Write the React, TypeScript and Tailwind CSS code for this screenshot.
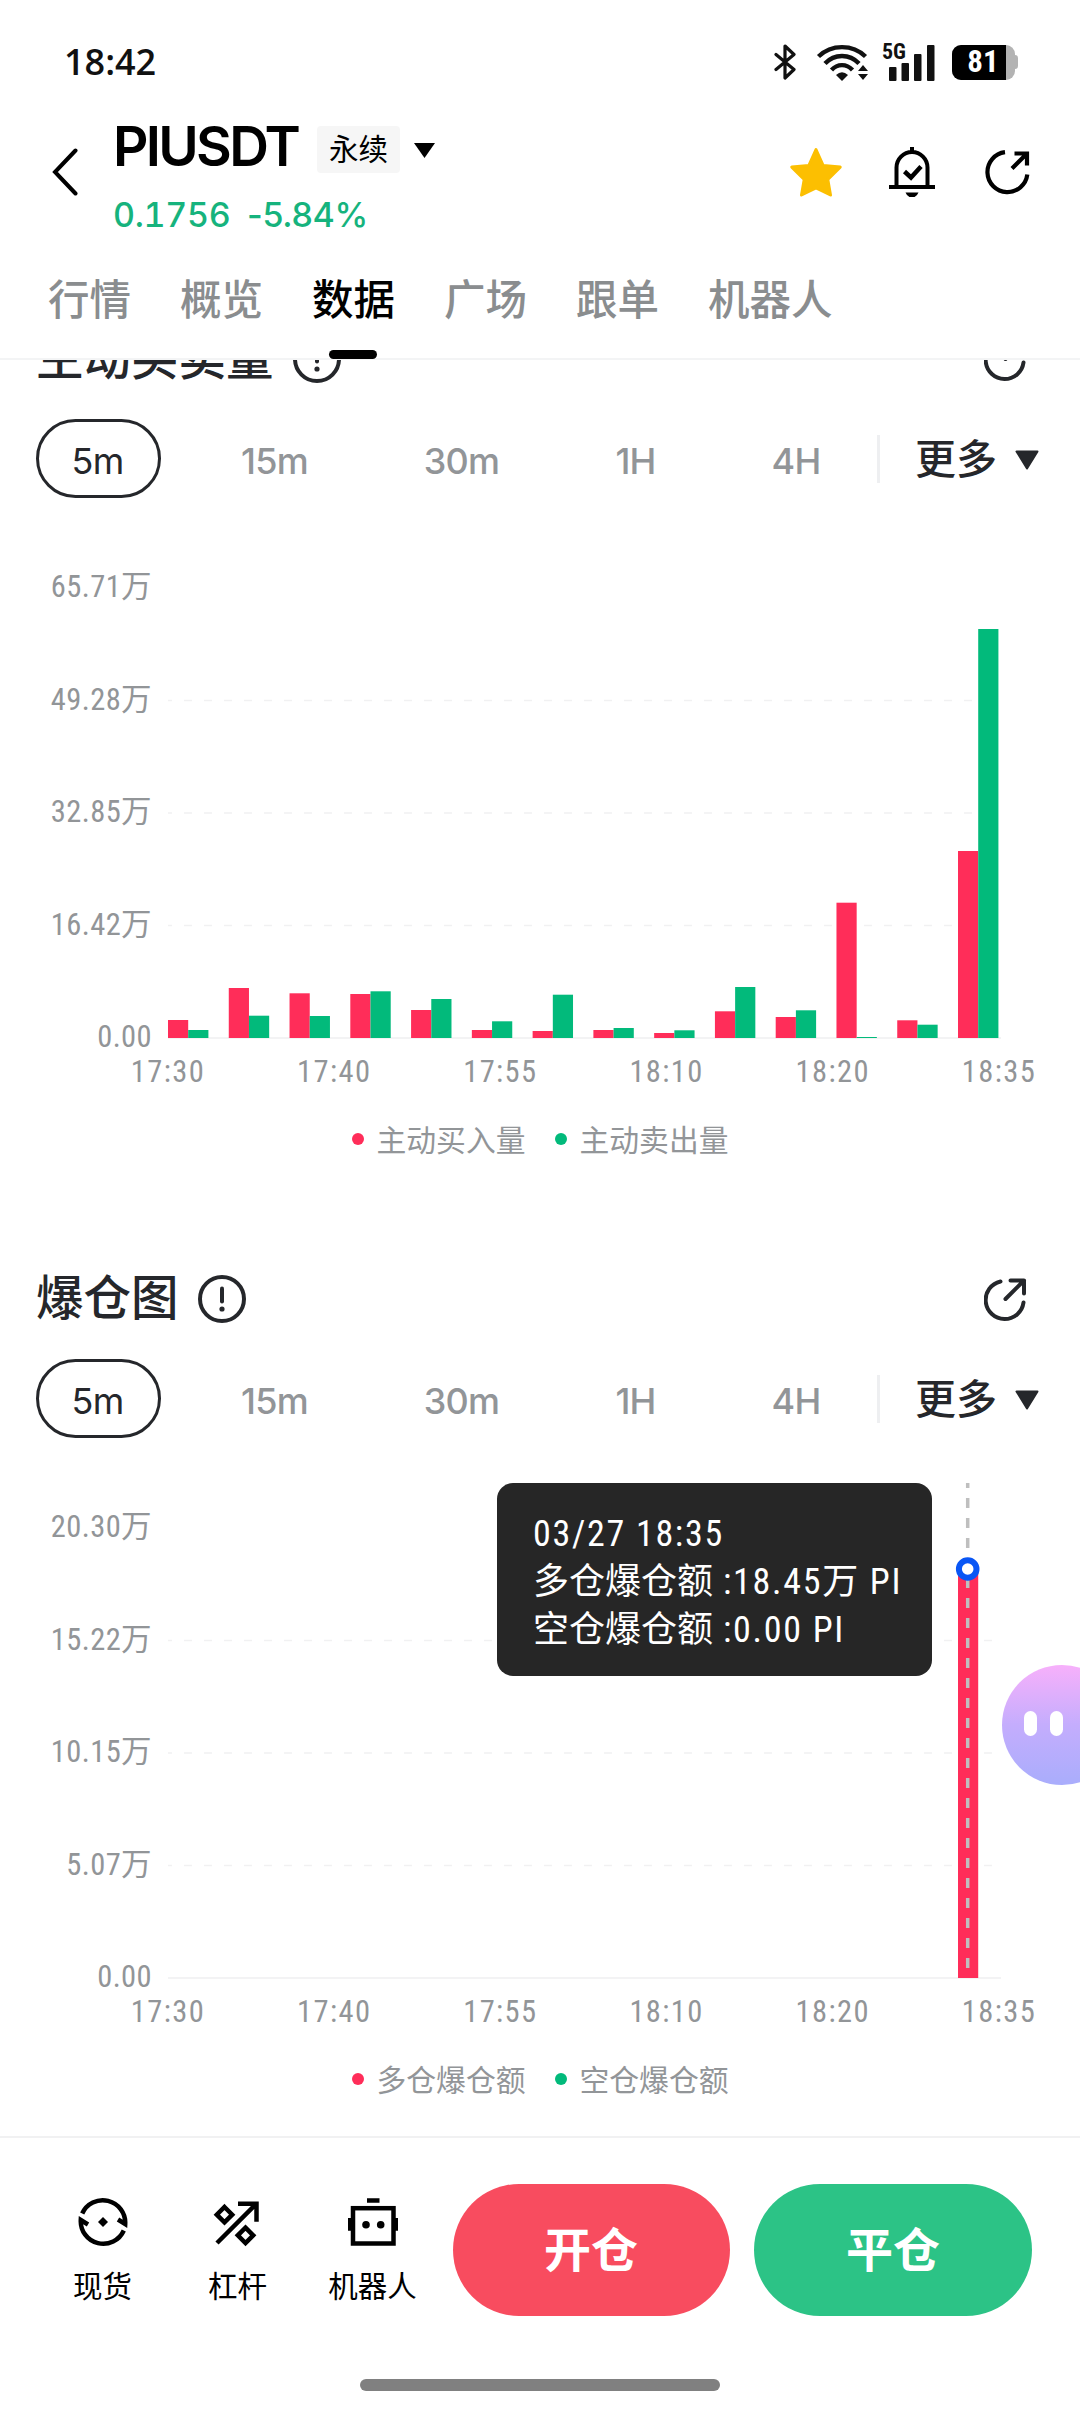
import clsx from 'clsx';
import type { ReactNode } from 'react';

const UI = "font-['Inter','Noto_Sans_CJK_SC',sans-serif]";
const DIN = "font-['Roboto','Noto_Sans_CJK_SC',sans-serif] [font-stretch:75%]";

const RED = '#ff2d59';
const GREEN = '#02ba7b';

const tabs = ['行情', '概览', '数据', '广场', '跟单', '机器人'];
const times = ['17:30', '17:40', '17:55', '18:10', '18:20', '18:35'];

const frames = [
  { label: '5m', width: 'w-[125px]' },
  { label: '15m', width: 'w-[139px]' },
  { label: '30m', width: 'w-[147px]' },
  { label: '1H', width: 'w-[113px]' },
  { label: '4H', width: 'w-[120px]' },
];

// bar heights in px as [buy, sell]
const volumes = [
  [18, 8],
  [50, 22.3],
  [44.7, 22],
  [44, 46.7],
  [28, 39],
  [8, 16.7],
  [7, 43.3],
  [8, 10],
  [5, 7.7],
  [26.7, 51],
  [21, 27.7],
  [135.3, 1],
  [17.7, 13.3],
  [187, 409],
];

const liquidations = volumes.map((_, i) => [i === 13 ? 409 : 0, 0]);

function StatusBar() {
  return (
    <div className="flex h-[106px] items-center pt-[18px] pr-[62px] pl-[64px]">
      <span className="font-['Open_Sans',sans-serif] text-[36px] font-semibold text-[#111]">18:42</span>
      <div className="ml-auto flex items-center">
        <svg width="22" height="36" viewBox="0 0 22 36" fill="none" stroke="#111" strokeWidth="3.2" strokeLinejoin="round" strokeLinecap="round">
          <path d="M2 10.5 20 25.5 11 34V2l9 8.5L2 25.5" />
        </svg>
        <svg className="ml-[20px]" width="54" height="37" viewBox="0 0 54 37" fill="none" stroke="#111" strokeWidth="4.4">
          <path d="M2.5 12.5C15.5 0 36.5 0 49.5 12.5" />
          <path d="M9 19.5C18.5 9.5 33.5 9.5 43 19.5" />
          <path d="M15.5 26C21.5 19.5 30.5 19.5 36.5 26" />
          <path d="M20 31q6-5.5 12 0l-6 6z" fill="#111" stroke="none" />
          <path d="m42 27 5-6 5 6zM42 30h10l-5 6z" fill="#111" stroke="none" />
        </svg>
        <div className="relative ml-[16px] h-[37px] w-[52px]">
          <span className="absolute -top-px left-[-4px] font-['Roboto',sans-serif] text-[22px] leading-[18px] font-bold text-[#111] [font-stretch:75%]">
            5G
          </span>
          <svg width="52" height="37" viewBox="0 0 52 37" fill="#111">
            <rect x="3" y="23" width="7.5" height="14" rx="1" />
            <rect x="15.5" y="19" width="7.5" height="18" rx="1" />
            <rect x="28" y="10" width="7.5" height="27" rx="1" />
            <rect x="41" y="1" width="7.5" height="36" rx="1" />
          </svg>
        </div>
        <div className="ml-[14px] flex items-center">
          <div className="flex h-[35px] w-[63px] overflow-hidden rounded-[9px] bg-[#b3b3b3]">
            <div className="flex w-[54px] items-center justify-center bg-black pl-[8px] font-['Roboto',sans-serif] text-[31px] leading-[34px] font-bold text-white [font-stretch:75%]">
              81
            </div>
          </div>
          <div className="h-[14px] w-[3px] rounded-r-full bg-[#b3b3b3]" />
        </div>
      </div>
    </div>
  );
}

function Header() {
  return (
    <div className="flex h-[132px] items-center">
      <svg className="ml-[50px]" width="28" height="48" viewBox="0 0 28 48" fill="none" stroke="#000" strokeWidth="4">
        <path d="M25.5 2.5 5 24l20.5 21.5" strokeLinecap="round" />
      </svg>
      <div className="ml-[35px] flex flex-col pt-4">
        <div className="flex h-[68px] items-center">
          <h1 className="w-[204px] text-[55px] font-semibold tracking-[-2.7px] whitespace-nowrap text-black">PIUSDT</h1>
          <span className="mt-[7px] flex h-[47px] w-[83px] items-center justify-center rounded bg-[#f6f6f6] text-[29.5px] text-black">永续</span>
          <svg className="mt-[8px] ml-[14px]" width="21" height="15" viewBox="0 0 21 15">
            <path d="M0 0h21L10.5 15z" />
          </svg>
        </div>
        <div className="flex h-[68px] items-center text-[34px] font-medium text-[#16b37d]">
          <span className="w-[134px] tracking-[-0.3px] tabular-nums">0.1756</span>
          <span className="tracking-[-0.3px]">-5.84%</span>
        </div>
      </div>
      <div className="mr-[49px] ml-auto flex items-center">
        <svg width="52" height="50" viewBox="0 0 52 50" fill="#fcbf01" stroke="#fcbf01" strokeWidth="3" strokeLinejoin="round">
          <path d="M26 2.5l7.2 16 17 1.6-12.4 12.4 2.7 15.5L26 40.8 11.5 48l2.7-15.5L1.8 20.1l17-1.6z" />
        </svg>
        <svg className="ml-[45px]" width="50" height="50" viewBox="0 0 50 50" fill="none" stroke="#000" strokeWidth="4">
          <path d="M2 40h46M9.5 40V20.5a15.5 15.5 0 0 1 31 0V40M25 0v5" />
          <path d="M17.5 24.5l6.5 6 10-11" strokeWidth="4.5" />
          <path d="M18.5 45.5h13q-2 5-6.5 5t-6.5-5z" fill="#000" stroke="none" />
        </svg>
        <svg className="ml-[48px]" width="46" height="48" viewBox="0 0 46 48" fill="none" stroke="#000" strokeWidth="4.2">
          <path d="M20 4.2A20 20 0 1 0 42.3 26.5" />
          <path d="M29.5 5.5H42V17.5M27 20.5 42 5.5" />
        </svg>
      </div>
    </div>
  );
}

function Tabs() {
  return (
    <div className="relative z-10 flex h-[122px] items-center gap-[49px] border-b-2 border-[#f3f4f5] bg-white pl-[48px]">
      {tabs.map((tab) => (
        <div
          key={tab}
          className={clsx(
            'relative flex h-full items-center pt-[4px] text-[41.5px] font-medium whitespace-nowrap',
            tab === '数据' ? 'text-black' : 'text-[#8a8d8f]'
          )}
        >
          {tab}
          {tab === '数据' && <span className="absolute bottom-[-1px] left-[17px] h-[9px] w-[48px] rounded-full bg-black" />}
        </div>
      ))}
    </div>
  );
}

function ShareIcon() {
  return (
    <svg width="44" height="44" viewBox="0 0 44 44" fill="none" stroke="#25272b" strokeWidth="4" strokeLinecap="round" strokeLinejoin="round">
      <path d="M16.5 3.5A19 19 0 1 0 39.5 24.5" />
      <path d="M26.5 2.5H40V15.5M21.5 21 40 2.5" />
    </svg>
  );
}

function Frames() {
  return (
    <div className="mt-[26px] flex h-[79px] items-center pl-[36px] text-[#25272b]">
      <div className="flex h-full items-center gap-[44px]">
        {frames.map(({ label, width }, i) => (
          <div
            key={label}
            className={clsx(
              'flex h-full items-center justify-center pt-[4px] text-[36px] tracking-[-0.8px]',
              width,
              i === 0 ? 'rounded-full border-3 border-[#25272b] pr-[2px]' : 'font-medium text-[#929598]'
            )}
          >
            {label}
          </div>
        ))}
      </div>
      <div className="ml-[21px] h-[48px] w-[3px] bg-[#eeeff1]" />
      <span className="ml-[35px] pt-[3px] text-[41px] font-medium">更多</span>
      <svg className="mt-[2px] ml-[18px]" width="24" height="20" viewBox="0 0 24 20" fill="#25272b" stroke="#25272b" strokeWidth="2" strokeLinejoin="round">
        <path d="M1.5 1.5h21L12 18.5z" />
      </svg>
    </div>
  );
}

interface ChartProps {
  title: string;
  levels: string[];
  legend: string[];
  bars: number[][];
  overlay?: ReactNode;
  children?: ReactNode;
}

function ChartSection({ title, levels, legend, bars, overlay, children }: ChartProps) {
  return (
    <section className="h-[940px] shrink-0">
      <div className="flex h-[70px] items-center pr-[52px] pl-[36px]">
        <h2 className="text-[47.5px] font-medium whitespace-nowrap text-[#25272b]">{title}</h2>
        <svg className="mt-[2px] ml-[19px]" width="48" height="48" viewBox="0 0 48 48" fill="none" stroke="#25272b" strokeWidth="4" strokeLinecap="round">
          <circle cx="24" cy="24" r="22" />
          <path d="M24 13.5v13" />
          <circle cx="24" cy="34" r="2.6" fill="#25272b" stroke="none" />
        </svg>
        <div className="ml-auto pt-[4px]">
          <ShareIcon />
        </div>
      </div>

      <Frames />

      <div className={clsx('relative mt-[45px] flex h-[509px] items-end', DIN)}>
        <div className="flex h-[480px] w-[152px] flex-col justify-between text-right text-[30.5px] leading-[30px] tracking-[0.4px] text-[#929598]">
          {levels.map((level) => (
            <span key={level}>{level}</span>
          ))}
        </div>
        <svg className="-ml-[2px]" width="930" height="509" viewBox="0 0 930 509">
          {[157.5, 270, 382.5].map((y) => (
            <line key={y} x1="18" x2="850" y1={y} y2={y} stroke="#f1f1f2" strokeWidth="1.5" strokeDasharray="8 12" strokeDashoffset="4" />
          ))}
          <line x1="18" x2="851" y1="495" y2="495" stroke="#f3f3f4" strokeWidth="2" />
          {bars.map(([a, b], i) => (
            <g key={i}>
              <rect x={18 + i * 60.77} y={495 - a} width="20.2" height={a} fill={RED} />
              <rect x={38.2 + i * 60.77} y={495 - b} width="20.2" height={b} fill={GREEN} />
            </g>
          ))}
          {overlay}
        </svg>
        {children}
      </div>

      <div className={clsx('ml-[118px] flex h-[38px] w-[931px] items-center justify-between pt-px text-[30.5px] tracking-[1.4px] text-[#929598]', DIN)}>
        {times.map((time) => (
          <span key={time} className="w-[100px] text-center">
            {time}
          </span>
        ))}
      </div>

      <div className="mt-[30px] flex h-[40px] items-center justify-center gap-[29px] text-[29.8px] text-[#929598]">
        {legend.map((name, i) => (
          <div key={name} className="flex items-center gap-[13px]">
            <span className={clsx('-mt-[3px] size-[12px] rounded-full', i === 0 ? 'bg-[#ff2d59]' : 'bg-[#02ba7b]')} />
            {name}
          </div>
        ))}
      </div>
    </section>
  );
}

function BottomItem({ label, children }: { label: string; children: ReactNode }) {
  return (
    <div className="flex w-[135px] flex-col items-center">
      <svg width="50" height="50" viewBox="0 0 50 50" fill="none" stroke="#000" strokeWidth="4.5">
        {children}
      </svg>
      <span className="mt-[19px] text-[29.5px] leading-[40px] text-black">{label}</span>
    </div>
  );
}

function BottomBar() {
  return (
    <div className="relative h-[276px] border-t-2 border-[#f1f1f2] bg-white">
      <div className="flex pl-[35px]">
        <div className="flex pt-[59px]">
          <BottomItem label="现货">
            <path d="M4.2 16.5A22.5 22.5 0 0 1 47.2 27L40 22.5" />
            <path d="M45.8 33.5A22.5 22.5 0 0 1 2.8 23L10 27.5" />
            <path d="M25 20l5 5-5 5-5-5z" fill="#000" stroke="none" />
          </BottomItem>
          <BottomItem label="杠杆">
            <path d="M4 46 43 7M25 6.7H43.5V24.7" />
            <path d="M11.5 10l7.7 7.7-7.7 7.7-7.7-7.7zM32.5 30.6l7.7 7.7-7.7 7.7-7.7-7.7z" />
          </BottomItem>
          <BottomItem label="机器人">
            <rect x="5" y="11.2" width="40.5" height="35.3" />
            <path d="M19 3.5h12.5M2 21v12.7M48.5 21v12.7" />
            <circle cx="18" cy="27.7" r="3.8" fill="#000" stroke="none" />
            <circle cx="32.7" cy="27.7" r="3.8" fill="#000" stroke="none" />
          </BottomItem>
        </div>
        <div className="mt-[46px] ml-[13px] flex gap-[24px]">
          <button className="h-[132px] w-[277px] rounded-full bg-[#f84c5f] pr-px text-[47px] font-bold text-white">开仓</button>
          <button className="h-[132px] w-[278px] rounded-full bg-[#2cc386] text-[47px] font-bold text-white">平仓</button>
        </div>
      </div>
      <div className="mx-auto mt-[63px] h-[12px] w-[360px] rounded-full bg-[#808080]" />
    </div>
  );
}

export default function App() {
  return (
    <div className={clsx('relative flex h-[2412px] w-[1080px] flex-col overflow-hidden bg-white', UI)}>
      <StatusBar />
      <Header />
      <Tabs />

      <main className="h-[1776px] overflow-hidden">
        <div className="-mt-[37px] flex flex-col">
          <ChartSection
            title="主动买卖量"
            levels={['65.71万', '49.28万', '32.85万', '16.42万', '0.00']}
            legend={['主动买入量', '主动卖出量']}
            bars={volumes}
          />
          <ChartSection
            title="爆仓图"
            levels={['20.30万', '15.22万', '10.15万', '5.07万', '0.00']}
            legend={['多仓爆仓额', '空仓爆仓额']}
            bars={liquidations}
            overlay={
              <>
                <line x1="817.7" x2="817.7" y1="0" y2="491" stroke="#bfbfbf" strokeWidth="3.5" strokeDasharray="10 10" strokeDashoffset="5" />
                <circle cx="817.7" cy="86" r="8.8" fill="#fff" stroke="#0956f5" strokeWidth="6" />
              </>
            }
          >
            <div className="absolute top-0 left-[497px] flex h-[193px] w-[435px] flex-col rounded-2xl bg-[#262626] pt-[27px] pl-[36px] text-[36px] leading-[48px] tracking-[1.7px] whitespace-nowrap text-white">
              <span>03/27 18:35</span>
              <span>
                <span className="tracking-normal">多仓爆仓额</span> :18.45万 PI
              </span>
              <span>
                <span className="tracking-normal">空仓爆仓额</span> :0.00 PI
              </span>
            </div>
          </ChartSection>
        </div>
      </main>

      <BottomBar />

      {/* floating assistant, half off screen */}
      <div className="absolute top-[1665px] left-[1002px] flex h-[120px] w-[120px] items-center gap-[13px] rounded-full bg-gradient-to-b from-[#f7b0fb] via-[#c4adfd] to-[#a9adfc] pb-[4px] pl-[22px]">
        <span className="h-[25px] w-[13px] rounded-full bg-white" />
        <span className="h-[25px] w-[13px] rounded-full bg-white" />
      </div>
    </div>
  );
}
